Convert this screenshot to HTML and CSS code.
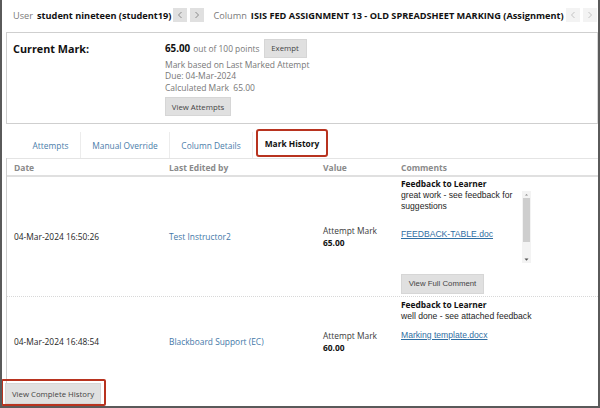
FILE: index.html
```html
<!DOCTYPE html>
<html>
<head>
<meta charset="utf-8">
<link rel="stylesheet" href="styles.css">
</head>
<body>
<div class="frame">
  <div class="topbar">
    <span class="lbl">User</span>
    <span class="val">student nineteen (student19)</span>
    <span class="navs">
      <span class="nav"><svg width="6" height="8" viewBox="0 0 6 8"><path d="M4.5 1 L1.5 4 L4.5 7" fill="none" stroke="currentColor" stroke-width="1"/></svg></span>
      <span class="nav"><svg width="6" height="8" viewBox="0 0 6 8"><path d="M1.5 1 L4.5 4 L1.5 7" fill="none" stroke="currentColor" stroke-width="1"/></svg></span>
    </span>
    <span class="lbl col">Column</span>
    <span class="val">ISIS FED ASSIGNMENT 13 - OLD SPREADSHEET MARKING (Assignment)</span>
    <span class="navs light">
      <span class="nav"><svg width="6" height="8" viewBox="0 0 6 8"><path d="M4.5 1 L1.5 4 L4.5 7" fill="none" stroke="currentColor" stroke-width="1"/></svg></span>
      <span class="nav"><svg width="6" height="8" viewBox="0 0 6 8"><path d="M1.5 1 L4.5 4 L1.5 7" fill="none" stroke="currentColor" stroke-width="1"/></svg></span>
    </span>
  </div>

  <div class="markbox">
    <div class="mb-title">Current Mark:</div>
    <div class="mb-body">
      <div class="mb-score"><b>65.00</b><span class="muted">out of 100 points</span><span class="btn exempt">Exempt</span></div>
      <div class="muted line">Mark based on Last Marked Attempt</div>
      <div class="muted line">Due: 04-Mar-2024</div>
      <div class="muted line">Calculated Mark&nbsp; 65.00</div>
      <span class="btn attempts">View Attempts</span>
    </div>
  </div>

  <div class="tabs">
    <span class="tab">Attempts</span>
    <span class="tab">Manual Override</span>
    <span class="tab">Column Details</span>
    <span class="tab active">Mark History</span>
  </div>

  <div class="table">
    <div class="thead">
      <span>Date</span><span>Last Edited by</span><span>Value</span><span>Comments</span>
    </div>
    <div class="row r1">
      <span class="date">04-Mar-2024 16:50:26</span>
      <span class="who">Test Instructor2</span>
      <span class="value">Attempt Mark<br><b>65.00</b></span>
      <div class="comment">
        <div class="cbox">
          <div class="ctext">
            <b class="fb">Feedback to Learner</b>
            <div>great work - see feedback for suggestions</div>
            <a class="file f1">FEEDBACK-TABLE.doc</a>
          </div>
          <div class="scroll">
            <svg class="arr" width="9" height="7" viewBox="0 0 9 7"><path d="M3 4.5 L4.5 3 L6 4.5 Z" fill="#888"/></svg>
            <span class="thumb"></span>
            <svg class="arr down" width="9" height="7" viewBox="0 0 9 7"><path d="M2.5 2.5 L6.5 2.5 L4.5 4.8 Z" fill="#555"/></svg>
          </div>
        </div>
        <span class="btn full">View Full Comment</span>
      </div>
    </div>
    <div class="row r2">
      <span class="date">04-Mar-2024 16:48:54</span>
      <span class="who">Blackboard Support (EC)</span>
      <span class="value">Attempt Mark<br><b>60.00</b></span>
      <div class="comment">
        <b class="fb">Feedback to Learner</b>
        <div>well done - see attached feedback</div>
        <a class="file f2">Marking template.docx</a>
      </div>
    </div>
    <div class="foot">
      <span class="hl"><span class="btn complete">View Complete History</span></span>
    </div>
  </div>
</div>
</body>
</html>
```

FILE: styles.css
```css
* { box-sizing: border-box; }
html, body { margin: 0; padding: 0; background: #fff; }
body { font-family: "Open Sans", "Liberation Sans", sans-serif; font-size: 8.5px; color: #222; }
.frame {
  width: 600px; height: 408px; overflow: hidden;
  border-left: 2px solid #5a5a5a; border-right: 2px solid #5a5a5a; border-bottom: 2px solid #5a5a5a;
  display: flex; flex-direction: column;
}

.topbar { display: flex; align-items: center; height: 32px; padding-left: 11px; padding-bottom: 1px; white-space: nowrap; }
.lbl { color: #7a7a7a; margin-right: 4px; font-size: 9.2px; }
.lbl.col { margin-left: 9px; }
.val { font-weight: 700; font-size: 9.2px; color: #111; }
.navs { display: flex; gap: 3px; margin-left: 2px; }
.nav { width: 14px; height: 14px; background: #e0e0e0; color: #8a8a8a; display: flex; align-items: center; justify-content: center; }
.navs.light .nav { background: #f3f3f3; color: #c4c4c4; }

.markbox { margin-left: 4px; border: 1px solid #cfcfcf; border-right: 1px solid #d8d8d8; height: 93px; display: flex; padding: 6px 0 0 6px; }
.mb-title { width: 152px; font-weight: 700; font-size: 10.8px; color: #111; padding-top: 2px; }
.mb-body { display: flex; flex-direction: column; align-items: flex-start; }
.mb-score { display: flex; align-items: center; gap: 3px; font-size: 8.4px; height: 19px; margin-bottom: 1px; }
.mb-score b { font-size: 9.8px; color: #111; }
.muted { color: #777; }
.line { line-height: 11.4px; font-size: 8.5px; }
.btn { display: inline-flex; align-items: center; justify-content: center; background: #e0e0e0; border: 1px solid #d6d6d6; color: #444; font-size: 7.8px; }
.exempt { width: 43px; height: 19px; margin-left: 1px; }
.attempts { width: 66px; height: 19px; margin-top: 4px; }

.tabs { display: flex; align-items: flex-end; padding-left: 19px; height: 34px; }
.tab { color: #4a7daa; font-size: 8.4px; display: flex; align-items: center; justify-content: center; border-right: 1px solid #ececec; height: 26px; }
.tab:nth-child(1) { width: 60px; }
.tab:nth-child(2) { width: 89px; }
.tab:nth-child(3) { width: 83px; }
.tab.active { border: 2px solid #b8331f; border-radius: 3px; color: #111; font-weight: 700; width: 72px; height: 28px; margin-left: 3px; margin-bottom: 1px; padding-top: 1px; }

.table { margin-left: 4px; border-left: 1px solid #cfcfcf; flex: 1; display: flex; flex-direction: column; }
.thead, .row { display: grid; grid-template-columns: 155px 154px 78px 1fr; padding-left: 7px; }
.thead { height: 19px; align-items: center; font-weight: 700; color: #8a8a8a; font-size: 8.5px; border-top: 1px solid #e4e4e4; border-bottom: 2px solid #e0e0e0; padding-top: 1px; }
.row { align-items: center; }
.r1 { height: 120px; border-bottom: 1px dotted #d8d8d8; }
.r2 { height: 82px; }
.r2 > span { padding-top: 7px; }
.date { color: #1e1e1e; font-size: 8.4px; }
.who { color: #4478a8; font-size: 8.4px; }
.value { color: #3a3a3a; font-size: 8.4px; line-height: 12px; }
.value b { color: #111; }
.comment { align-self: start; font-family: "Liberation Sans", Arial, sans-serif; font-size: 8.6px; color: #1e1e1e; line-height: 10.8px; }
.r1 .comment { padding-top: 2px; }
.r2 .comment { padding-top: 3px; }
.cbox { display: flex; }
.ctext { width: 121px; }
.fb { font-family: "Open Sans", sans-serif; font-size: 8.4px; color: #111; display: block; }
.file { color: #2f6ea3; text-decoration: underline; display: block; }
.f1 { margin-top: 18px; }
.f2 { margin-top: 8px; }
.scroll { width: 9px; height: 72px; margin-top: 12px; background: #f3f3f3; display: flex; flex-direction: column; align-items: center; }
.scroll .arr { display: block; flex: none; }
.scroll .thumb { width: 7px; height: 44px; background: #cecece; flex: none; }
.scroll .arr.down { margin-top: auto; }
.full { width: 83px; height: 20px; margin-top: 11px; }

.foot { margin-top: auto; margin-left: -6px; }
.hl { display: inline-block; border: 2px solid #b8331f; border-radius: 2px; padding: 2px 3px 0 2px; }
.complete { width: 96px; height: 21px; }
```
